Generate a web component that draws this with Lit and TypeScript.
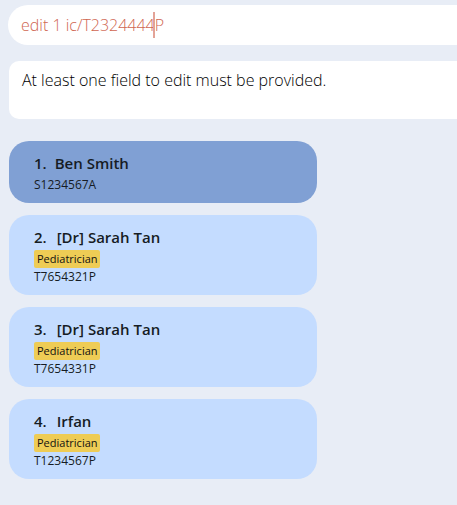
import { LitElement, html, css, nothing } from "lit";
import { customElement, property, state } from "lit/decorators.js";

interface Person {
  name: string;
  id: string;
  tag?: string;
}

@customElement("person-card")
class PersonCard extends LitElement {
  @property({ type: Number }) index = 1;
  @property({ attribute: false }) person!: Person;
  @property({ type: Boolean, reflect: true }) selected = false;

  static styles = css`
    :host {
      display: block;
      padding: 11px 25px 9px;
      border-radius: 20px;
      background: #c4dcff;
      color: #161c24;
    }
    :host([selected]) {
      background: #80a0d4;
    }
    .name {
      display: flex;
      gap: 10px;
      margin: 0 0 2px;
      font-size: 15px;
      font-weight: 600;
      line-height: 22px;
    }
    :host([selected]) .name {
      gap: 8px;
    }
    .tag {
      display: block;
      width: fit-content;
      padding: 0 2px 0 3px;
      border-radius: 2px;
      background: #eecc55;
      color: #111;
      font-size: 11px;
      line-height: 18px;
    }
    .id {
      margin: 0;
      font-size: 12px;
      line-height: 18px;
    }
  `;

  render() {
    const { name, id, tag } = this.person;
    return html`
      <h2 class="name"><span>${this.index}.</span><span>${name}</span></h2>
      ${tag ? html`<span class="tag">${tag}</span>` : nothing}
      <p class="id">${id}</p>
    `;
  }
}

@customElement("app-root")
class AppRoot extends LitElement {
  @state() private people: Person[] = [
    { name: "Ben Smith", id: "S1234567A" },
    { name: "[Dr] Sarah Tan", id: "T7654321P", tag: "Pediatrician" },
    { name: "[Dr] Sarah Tan", id: "T7654331P", tag: "Pediatrician" },
    { name: "Irfan", id: "T1234567P", tag: "Pediatrician" },
  ];

  static styles = css`
    :host {
      display: block;
      box-sizing: border-box;
      min-height: 100vh;
      padding: 5px 0 24px 8px;
      background: #e8edf6;
      font-family: "Open Sans", "Noto Sans", sans-serif;
    }
    .command {
      position: relative;
      margin-bottom: 16px;
    }
    .field,
    .result {
      display: block;
      box-sizing: border-box;
      width: 100%;
      margin: 0;
      border: 0;
      outline: 0;
      background: #fff;
      font-family: inherit;
      font-size: 16px;
      font-weight: 300;
    }
    .field {
      height: 40px;
      padding: 0 13px;
      border-radius: 20px 0 0 20px;
      color: #d06651;
    }
    .caret {
      position: absolute;
      top: 7px;
      left: 145px;
      width: 2px;
      height: 26px;
      background: #e3a397;
    }
    .lower {
      padding-left: 1px;
    }
    .result {
      height: 58px;
      padding: 8px 13px;
      border-radius: 10px 0 0 10px;
      color: #000;
      line-height: 22px;
      resize: none;
      overflow: hidden;
    }
    .panes {
      display: grid;
      grid-template-columns: 11fr 5fr;
      margin-top: 22px;
    }
    .list {
      display: flex;
      flex-direction: column;
      gap: 12px;
      margin: 0;
      padding: 0;
      list-style: none;
    }
  `;

  render() {
    return html`
      <div class="command">
        <input class="field" type="text" aria-label="Command" spellcheck="false" .value=${"edit 1 ic/T2324444P"} />
        <span class="caret" aria-hidden="true"></span>
      </div>
      <div class="lower">
        <textarea class="result" aria-label="Result" readonly
          .value=${"At least one field to edit must be provided."}></textarea>
        <div class="panes">
          <ul class="list">
            ${this.people.map(
              (person, i) => html`<li>
                <person-card .index=${i + 1} .person=${person} ?selected=${i === 0}></person-card>
              </li>`
            )}
          </ul>
        </div>
      </div>
    `;
  }
}
